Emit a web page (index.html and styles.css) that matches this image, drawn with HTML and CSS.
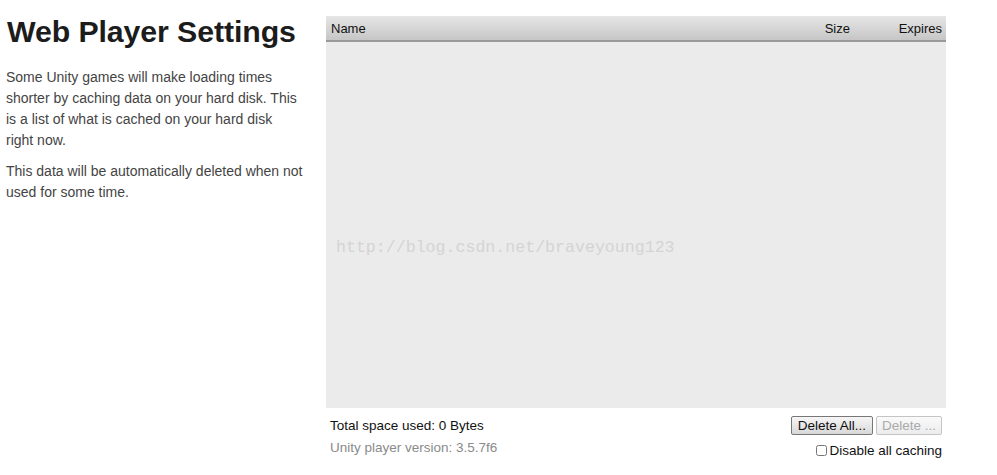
FILE: index.html
```html
<!DOCTYPE html>
<html lang="en">
<head>
    <meta charset="UTF-8">
    <title>Web Player Settings</title>
    <link rel="stylesheet" href="styles.css">
</head>
<body>

    <div class="page">
        <div class="intro">
            <h1>Web Player Settings</h1>
            <p>Some Unity games will make loading times shorter by caching data on your hard disk. This is a list of what is cached on your hard disk right now.</p>
            <p>This data will be automatically deleted when not used for some time.</p>
        </div>

        <div class="cache">
            <div class="cache-head">
                <span class="col-name">Name</span>
                <span class="col-size">Size</span>
                <span class="col-expires">Expires</span>
            </div>
            <div class="cache-list">
                <span class="mark">http://blog.csdn.net/braveyoung123</span>
            </div>

            <div class="cache-foot">
                <div class="info">
                    <div class="total">Total space used: 0 Bytes</div>
                    <div class="version">Unity player version: 3.5.7f6</div>
                </div>
                <div class="actions">
                    <div class="buttons">
                        <button>Delete All...</button>
                        <button disabled>Delete ...</button>
                    </div>
                    <label class="check"><input type="checkbox">Disable all caching</label>
                </div>
            </div>
        </div>
    </div>

</body>
</html>
```

FILE: styles.css
```css
/* Page */
body {
    margin: 0;
    font-family: 'Liberation Sans', Arial, sans-serif;
    background: #fff;
    color: #444;
}

.page {
    display: flex;
    gap: 23px;
    padding: 16px 51px 0 6px;
}

/* Left column */
.intro {
    width: 297px;
    flex-shrink: 0;
}

.intro h1 {
    margin: -1px 0 0 1px;
    font-size: 30.3px;
    line-height: 34px;
    color: #1c1c1c;
    letter-spacing: -0.1px;
    white-space: nowrap;
}

.intro p {
    margin: 0 0 10px;
    font-size: 14px;
    line-height: 21px;
}

.intro h1 + p {
    margin-top: 18px;
}

/* Cache list */
.cache {
    flex: 1;
}

.cache-head {
    display: flex;
    height: 24px;
    align-items: center;
    background: linear-gradient(#e6e6e6, #c6c6c6);
    border-bottom: 2px solid #9a9a9a;
    font-size: 13px;
    color: #111;
}

.col-name {
    flex: 1;
    padding-left: 5px;
}

.col-size {
    width: 74px;
}

.col-expires {
    padding-right: 4px;
}

.cache-list {
    height: 366px;
    background: #ebebeb;
    position: relative;
}

.mark {
    position: absolute;
    left: 10px;
    top: 196px;
    font-family: 'Liberation Mono', monospace;
    font-size: 16.6px;
    color: #d4d4d4;
}

/* Footer */
.cache-foot {
    display: flex;
    justify-content: space-between;
    padding: 8px 4px 0 4px;
    font-size: 13.5px;
}

.total {
    color: #111;
    margin-top: 2px;
}

.version {
    color: #8a8a8a;
    margin-top: 7px;
}

.actions {
    display: flex;
    flex-direction: column;
    align-items: flex-end;
}

.buttons {
    display: flex;
    gap: 3px;
}

button {
    font-family: inherit;
    font-size: 13.5px;
    height: 19px;
    padding: 0 6px;
    color: #111;
    background: linear-gradient(#f6f6f6, #d8d8d8);
    border: 1px solid #777;
    border-radius: 2px;
}

button:disabled {
    padding: 0 5px;
    color: #aaa;
    border-color: #c4c4c4;
    background: linear-gradient(#fafafa, #ececec);
}

.check {
    display: flex;
    align-items: center;
    margin-top: 8px;
    color: #111;
}

.check input {
    width: 11px;
    height: 11px;
    margin: 0 2px 0 0;
}
```
